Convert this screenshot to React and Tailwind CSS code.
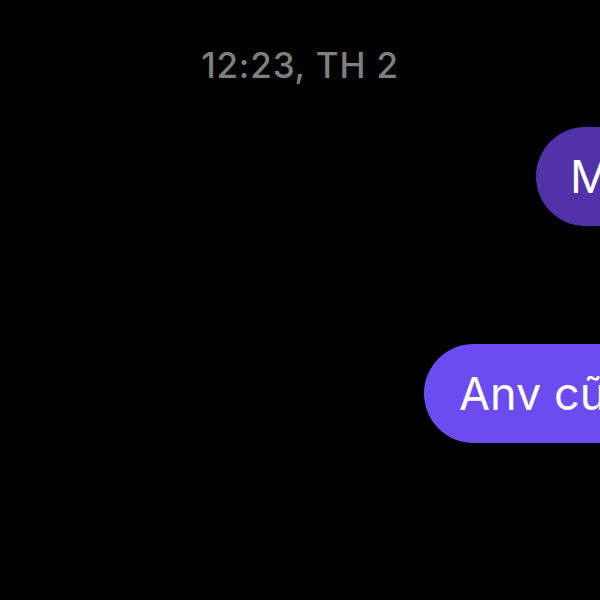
export default function App() {
  return (
    <div className="w-[600px] h-[600px] bg-black overflow-hidden font-['Inter','Liberation_Sans',sans-serif]">
      {/* Timestamp */}
      <div className="pt-[44px] text-center text-[35px] leading-[42px] font-medium tracking-[0.8px] text-[#7f7f7f]">
        12:23, TH 2
      </div>

      {/* Messages */}
      <div className="mt-[41px] flex flex-col">
        <div className="ml-[536px] w-max h-[99px] flex items-center pl-[34px] pr-[40px] rounded-full bg-[#5232a9] text-white text-[45px] whitespace-nowrap">
          Mình đi ngủ đây
        </div>
        <div className="mt-[118px] ml-[424px] w-max h-[99px] flex items-center pl-[35px] pr-[40px] rounded-full bg-[#6c4cf1] text-white text-[45px] whitespace-nowrap">
          Anv cũng đi ngủ đây
        </div>
      </div>
    </div>
  );
}
